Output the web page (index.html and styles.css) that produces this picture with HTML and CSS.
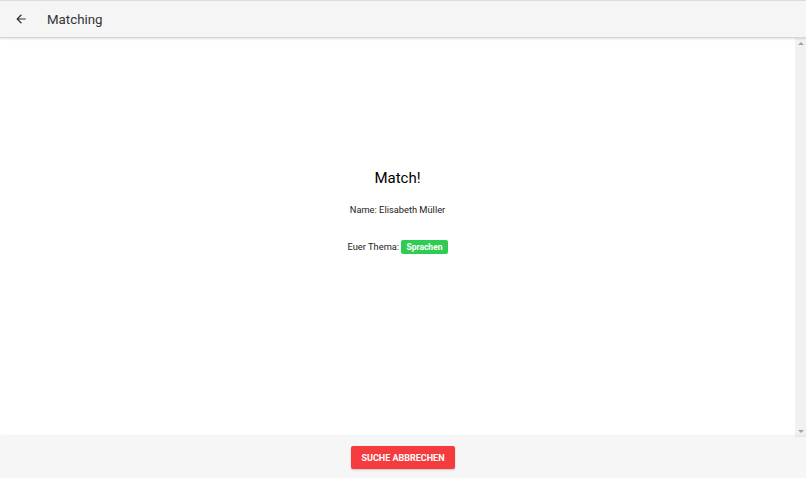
FILE: index.html
```html
<!DOCTYPE html>
<html lang="de">
<head>
  <meta charset="UTF-8">
  <title>Matching</title>
  <link rel="stylesheet" href="styles.css">
</head>
<body>

<div class="app">
  <header class="toolbar">
    <button class="back" aria-label="Zurück">
      <svg width="14" height="14" viewBox="0 0 24 24"><path d="M20 11H7.83l5.59-5.59L12 4l-8 8 8 8 1.41-1.41L7.83 13H20v-2z" fill="#333"/></svg>
    </button>
    <span class="title">Matching</span>
  </header>

  <div class="body-row">
    <main class="content">
      <div class="match">
        <h2>Match!</h2>
        <p class="name">Name: Elisabeth Müller</p>
        <p class="topic">Euer Thema: <span class="badge">Sprachen</span></p>
      </div>
    </main>
    <div class="scrollbar">
      <span class="arrow up"></span>
      <span class="arrow down"></span>
    </div>
  </div>

  <footer class="actions">
    <button class="cancel">SUCHE ABBRECHEN</button>
  </footer>
</div>

</body>
</html>
```

FILE: styles.css
```css
html, body {
  margin: 0;
  height: 100%;
}
body {
  font-family: Roboto, "Liberation Sans", sans-serif;
  color: #212121;
  background: #fff;
}
.app {
  display: flex;
  flex-direction: column;
  height: 100%;
}
.toolbar {
  display: flex;
  align-items: center;
  height: 36px;
  background: #f5f5f5;
  border-top: 1px solid #dcdcdc;
  border-bottom: 1px solid #d6d6d6;
  box-shadow: 0 1px 2px rgba(0,0,0,0.12);
  position: relative;
  z-index: 1;
}
.back {
  border: 0;
  background: none;
  padding: 0;
  margin-left: 14px;
  width: 14px;
  height: 14px;
  display: flex;
}
.title {
  margin-left: 19px;
  font-size: 13.3px;
  color: #333;
}
.body-row {
  flex: 1;
  display: flex;
}
.content {
  flex: 1;
  display: flex;
  align-items: center;
  justify-content: center;
}
.scrollbar {
  width: 11px;
  background: #f1f1f1;
  display: flex;
  flex-direction: column;
  justify-content: space-between;
  align-items: center;
  padding: 4px 0;
}
.arrow {
  width: 0;
  height: 0;
  border-left: 3px solid transparent;
  border-right: 3px solid transparent;
}
.arrow.up {
  border-bottom: 3px solid #a3a3a3;
}
.arrow.down {
  border-top: 3px solid #a3a3a3;
}
.match {
  text-align: center;
  margin-top: -52px;
}
.match h2 {
  font-size: 15px;
  font-weight: 400;
  margin: 0 0 17px;
  color: #000;
}
.name, .topic {
  font-size: 9.3px;
  margin: 0;
  color: #222;
}
.topic {
  margin-top: 25px;
}
.badge {
  display: inline-block;
  background: #2ecc52;
  color: #fff;
  font-weight: 700;
  font-size: 8.5px;
  padding: 2px 5px;
  border-radius: 2px;
}
.actions {
  height: 41px;
  background: #f6f6f6;
  box-shadow: 0 -1px 3px rgba(0,0,0,0.08);
  display: flex;
  justify-content: center;
  align-items: center;
}
.cancel {
  background: #f43b3d;
  color: #fff;
  border: 0;
  border-radius: 2px;
  font-family: Roboto, "Liberation Sans", sans-serif;
  font-weight: 700;
  font-size: 9px;
  width: 104px;
  height: 23px;
  box-shadow: 0 1px 2px rgba(0,0,0,0.2);
}
```
